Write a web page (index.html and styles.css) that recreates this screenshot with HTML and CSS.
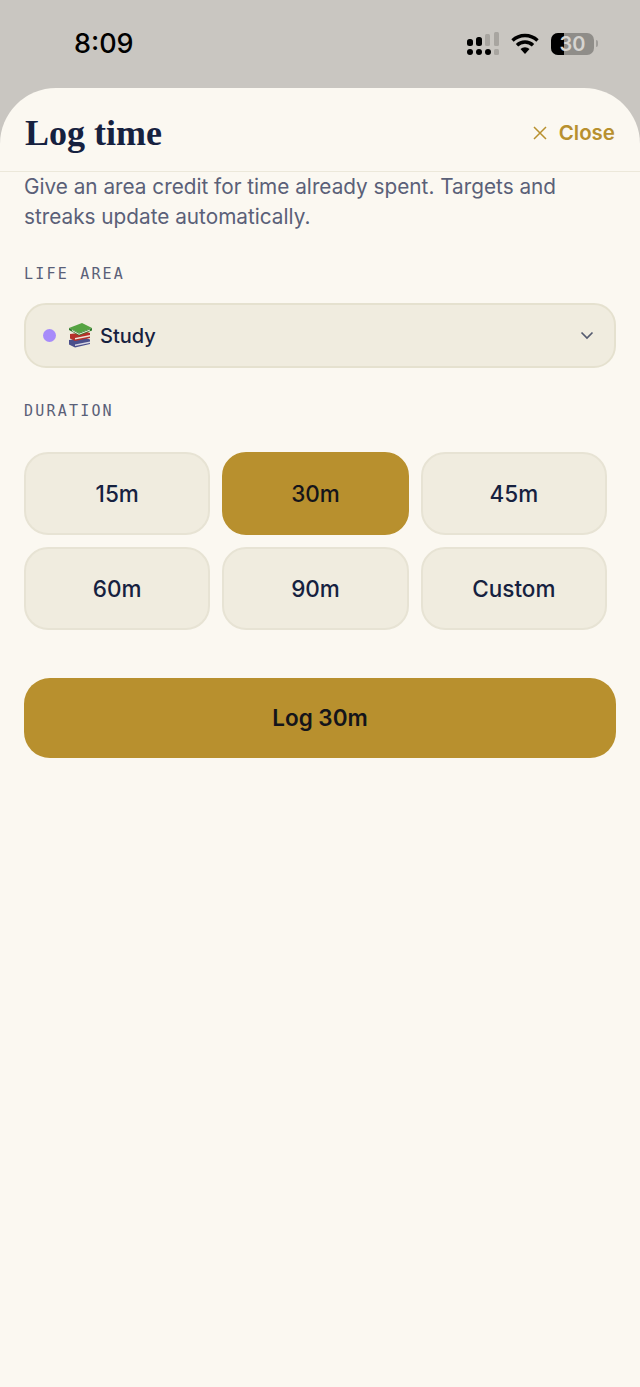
FILE: index.html
```html
<!DOCTYPE html>
<html>
  <head>
    <meta charset="utf-8">
    <title>Log time</title>
    <link rel="stylesheet" href="styles.css">
  </head>
  <body>
    <div class="status-bar">
      <span class="clock">8:09</span>
      <div class="status-icons">
        <svg class="cell" width="34" height="23" viewBox="0 0 34 23">
          <rect x="0" y="7" width="6" height="7" rx="2.5" fill="#000"/>
          <rect x="9" y="5" width="6" height="9" rx="2.5" fill="#000"/>
          <rect x="18" y="2" width="5" height="12" rx="1.5" fill="#a8a5a0"/>
          <rect x="27" y="0" width="5" height="14" rx="1.5" fill="#a8a5a0"/>
          <circle cx="3" cy="20" r="3" fill="#000"/>
          <circle cx="12" cy="20" r="3" fill="#000"/>
          <circle cx="21" cy="20" r="3" fill="#000"/>
          <rect x="27" y="17" width="5" height="6" rx="1.5" fill="#a8a5a0"/>
        </svg>
        <svg class="wifi" width="28" height="21" viewBox="0 0 28 21">
          <path d="M1.5 7.5a18 18 0 0 1 25 0" fill="none" stroke="#000" stroke-width="3.4"/>
          <path d="M6 12.2a11.500 11.500 0 0 1 16 0" fill="none" stroke="#000" stroke-width="3.4"/>
          <path d="M9.500 16a6.500 6.500 0 0 1 9 0L14 21z" fill="#000"/>
        </svg>
        <div class="battery">
          <div class="battery-body">
            <div class="battery-fill"></div>
            <span class="battery-num">30</span>
          </div>
          <div class="battery-cap"></div>
        </div>
      </div>
    </div>

    <div class="sheet">
      <header class="sheet-header">
        <h1>Log time</h1>
        <button class="close-button">
          <svg width="14" height="14" viewBox="0 0 14 14">
            <path d="M1 1l12 12M13 1L1 13" fill="none" stroke="#b8902e" stroke-width="1.500"/>
          </svg>
          Close
        </button>
      </header>

      <div class="sheet-content">
        <p class="intro">Give an area credit for time already spent. Targets and streaks update automatically.</p>

        <div class="label label-area">LIFE AREA</div>
        <div class="select">
          <span class="dot"></span>
          <svg class="books" width="24" height="25" viewBox="0 0 24 25">
            <path d="M1 17l17 -2l4 1.500v4.500l-15 3.500l-6 -3z" fill="#4a4f8c"/>
            <path d="M7 21.500l15 -3v1.500l-15 3z" fill="#d9d7e4"/>
            <path d="M2 11l17 -2l3 1v5l-15 3l-5 -2.500z" fill="#b5322a"/>
            <path d="M7 15l15 -3v1.500l-15 3z" fill="#efe7dc"/>
            <path d="M1 5l13 -5l10 5l-13 5z" fill="#55a341"/>
            <path d="M1 5l10 5l13 -5v2.500l-13 5l-10 -5.500z" fill="#2f7a2c"/>
            <path d="M4 7l7 3.800l11 -4.300v1l-11 4.300l-7 -3.800z" fill="#f2f0e4"/>
          </svg>
          <span class="select-text">Study</span>
          <svg class="chevron" width="14" height="9" viewBox="0 0 14 9">
            <path d="M1.500 1.500L7 7l5.500 -5.500" fill="none" stroke="#555b70" stroke-width="1.700"/>
          </svg>
        </div>

        <div class="label label-duration">DURATION</div>
        <div class="durations">
          <button class="duration">15m</button>
          <button class="duration active">30m</button>
          <button class="duration">45m</button>
          <button class="duration">60m</button>
          <button class="duration">90m</button>
          <button class="duration">Custom</button>
        </div>

        <button class="log-button">Log 30m</button>
      </div>
    </div>
  </body>
</html>
```

FILE: styles.css
```css
html, body {
  margin: 0;
  padding: 0;
}
body {
  width: 640px;
  height: 1387px;
  overflow: hidden;
  background-color: #c9c6c1;
  font-family: Inter, "Liberation Sans", sans-serif;
}
button {
  font-family: inherit;
  border: none;
  padding: 0;
  cursor: pointer;
}

/* status bar */
.status-bar {
  height: 88px;
  box-sizing: border-box;
  padding: 0 42px 0 74px;
  display: flex;
  align-items: flex-start;
  justify-content: space-between;
}
.clock {
  margin-top: 27px;
  font-size: 27px;
  line-height: 34px;
  font-weight: 500;
  color: #000;
}
.status-icons {
  margin-top: 32px;
  display: flex;
  align-items: center;
  gap: 10px;
}
.wifi {
  margin-right: 2px;
}
.battery {
  display: flex;
  align-items: center;
  gap: 2px;
}
.battery-body {
  position: relative;
  width: 43px;
  height: 22px;
  border-radius: 7px;
  background-color: #8f8d89;
  overflow: hidden;
}
.battery-fill {
  width: 13px;
  height: 22px;
  background-color: #000;
}
.battery-num {
  position: absolute;
  top: 0;
  left: 0;
  width: 43px;
  text-align: center;
  font-size: 20px;
  line-height: 22px;
  font-weight: 600;
  color: #d6d4d0;
}
.battery-cap {
  width: 2px;
  height: 7px;
  border-radius: 0 2px 2px 0;
  background-color: #a09e9a;
}

/* sheet */
.sheet {
  height: 1299px;
  background-color: #fbf8f1;
  border-radius: 56px 56px 0 0;
}
.sheet-header {
  height: 84px;
  box-sizing: border-box;
  padding: 6px 25px 0 25px;
  border-bottom: 1px solid #ece8da;
  display: flex;
  align-items: center;
  justify-content: space-between;
}
h1 {
  margin: 0;
  font-family: "Liberation Serif", serif;
  font-size: 36px;
  line-height: 44px;
  font-weight: 700;
  color: #16213f;
}
.close-button {
  display: flex;
  align-items: center;
  gap: 12px;
  background: none;
  font-size: 20.500px;
  line-height: 28px;
  font-weight: 600;
  color: #b8902e;
}
.sheet-content {
  padding: 0 24px;
}
.intro {
  margin: 0;
  font-size: 20.750px;
  line-height: 30px;
  color: #5a6078;
}
.label {
  font-family: "DejaVu Sans Mono", monospace;
  font-size: 15px;
  line-height: 20px;
  letter-spacing: 2.200px;
  color: #5a6078;
}
.label-area {
  margin-top: 32px;
}
.label-duration {
  margin-top: 33px;
}
.select {
  margin-top: 19px;
  height: 65px;
  box-sizing: border-box;
  padding: 0 20px 0 17px;
  background-color: #f0ecdf;
  border: 2px solid #e5e1cf;
  border-radius: 22px;
  display: flex;
  align-items: center;
}
.dot {
  width: 13px;
  height: 13px;
  border-radius: 50%;
  background-color: #a78bfa;
}
.books {
  margin-left: 12px;
}
.select-text {
  margin-left: 8px;
  font-size: 20px;
  font-weight: 500;
  color: #16213f;
}
.chevron {
  margin-left: auto;
}
.durations {
  margin-top: 31px;
  padding-right: 9px;
  display: grid;
  grid-template-columns: repeat(3, 1fr);
  gap: 12px;
}
.duration {
  height: 83px;
  box-sizing: border-box;
  background-color: #f0ecdf;
  border: 2px solid #e7e3d4;
  border-radius: 24px;
  font-size: 22.500px;
  font-weight: 500;
  color: #16213f;
}
.duration.active {
  background-color: #b8902e;
  border-color: #b8902e;
  color: #14141a;
}
.log-button {
  display: block;
  margin-top: 48px;
  width: 100%;
  height: 80px;
  background-color: #b8902e;
  border-radius: 26px;
  font-size: 22.500px;
  font-weight: 600;
  line-height: 26px;
  color: #14141a;
}
```
